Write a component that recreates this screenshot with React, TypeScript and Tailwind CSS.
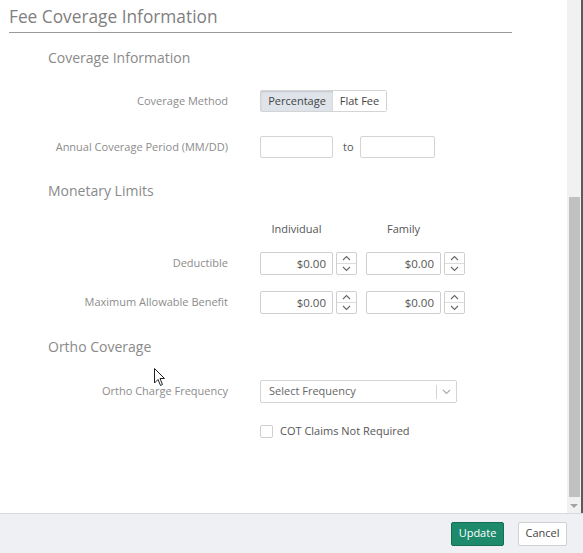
import React from "react";

const Spinner = () => (
  <div className="ml-[3px] flex h-[23px] w-[21px] flex-col rounded-[2px] border border-[#cfcfcf] bg-white">
    <div className="flex flex-1 items-center justify-center border-b border-[#dcdcdc]">
      <svg width="9" height="6" viewBox="0 0 9 6"><path d="M1 5 L4.5 1.5 L8 5" fill="none" stroke="#666" strokeWidth="1.1" /></svg>
    </div>
    <div className="flex flex-1 items-center justify-center">
      <svg width="9" height="6" viewBox="0 0 9 6"><path d="M1 1 L4.5 4.5 L8 1" fill="none" stroke="#666" strokeWidth="1.1" /></svg>
    </div>
  </div>
);

const NumInput = ({ w }: { w: string }) => (
  <div className={`flex h-[23px] ${w} items-center justify-end rounded-[2px] border border-[#cfcfcf] bg-white pr-[6px] text-[11.5px] text-[#555]`}>
    $0.00
  </div>
);

const Label = ({ children }: { children: React.ReactNode }) => (
  <div className="w-[229px] pr-[1px] text-right text-[11px] text-[#8c8c8c]">{children}</div>
);

export default function App() {
  return (
    <div className="relative flex h-[553px] w-[583px] flex-col overflow-hidden bg-white" style={{ fontFamily: '"Open Sans", sans-serif' }}>
      <div className="flex h-[513px]">
        <div className="flex flex-1 flex-col">
          <div className="ml-[9px] h-[33px] w-[503px] border-b border-[#9a9a9a] pt-[6px] text-[17.3px] leading-[22px] text-[#808080]">
            Fee Coverage Information
          </div>
          <div className="ml-[48px] mt-[13px] flex h-[22px] items-center text-[14px] text-[#8a8a8a]">Coverage Information</div>
          <div className="mt-[22px] flex h-[22px] items-center">
            <Label>Coverage Method</Label>
            <div className="ml-[31px] flex h-[22px] rounded-[2px] border border-[#d4d4d4] text-[11px] text-[#444]">
              <div className="flex w-[72px] items-center justify-center bg-[#dfe3ea] shadow-[inset_0_1px_2px_rgba(0,0,0,0.12)]">Percentage</div>
              <div className="flex w-[53px] items-center justify-center bg-white">Flat Fee</div>
            </div>
          </div>
          <div className="mt-[24px] flex h-[22px] items-center">
            <Label>Annual Coverage Period (MM/DD)</Label>
            <div className="ml-[31px] h-[22px] w-[73px] rounded-[2px] border border-[#d4d4d4] bg-white" />
            <div className="ml-[10px] w-[17px] text-[11px] text-[#555]">to</div>
            <div className="h-[22px] w-[75px] rounded-[2px] border border-[#d4d4d4] bg-white" />
          </div>
          <div className="ml-[48px] mt-[21px] flex h-[22px] items-center text-[14px] text-[#8a8a8a]">Monetary Limits</div>
          <div className="mt-[19px] flex h-[18px] items-center text-[11px] text-[#555]">
            <div className="ml-[260px] w-[73px] text-center">Individual</div>
            <div className="ml-[33px] w-[75px] text-center">Family</div>
          </div>
          <div className="mt-[14px] flex h-[23px] items-center">
            <Label>Deductible</Label>
            <div className="ml-[31px] flex items-center">
              <NumInput w="w-[73px]" />
              <Spinner />
              <div className="ml-[9px]" />
              <NumInput w="w-[75px]" />
              <Spinner />
            </div>
          </div>
          <div className="mt-[16px] flex h-[23px] items-center">
            <Label>Maximum Allowable Benefit</Label>
            <div className="ml-[31px] flex items-center">
              <NumInput w="w-[73px]" />
              <Spinner />
              <div className="ml-[9px]" />
              <NumInput w="w-[75px]" />
              <Spinner />
            </div>
          </div>
          <div className="ml-[48px] mt-[21px] flex h-[22px] items-center text-[14px] text-[#8a8a8a]">Ortho Coverage</div>
          <div className="mt-[23px] flex h-[23px] items-center">
            <Label>Ortho Charge Frequency</Label>
            <div className="ml-[31px] flex h-[23px] w-[197px] items-center rounded-[2px] border border-[#d4d4d4] bg-white text-[11px] text-[#666]">
              <div className="flex-1 pl-[8px]">Select Frequency</div>
              <div className="h-[14px] w-px bg-[#d4d4d4]" />
              <div className="flex w-[19px] items-center justify-center">
                <svg width="9" height="6" viewBox="0 0 9 6"><path d="M1 1 L4.5 4.5 L8 1" fill="none" stroke="#aaa" strokeWidth="1.1" /></svg>
              </div>
            </div>
          </div>
          <div className="mt-[20px] flex h-[16px] items-center">
            <div className="ml-[260px] h-[13px] w-[13px] rounded-[2px] border border-[#cfcfcf] bg-white" />
            <div className="ml-[7px] text-[11px] text-[#555]">COT Claims Not Required</div>
          </div>
        </div>
        <div className="relative w-[14px] bg-[#f1f1f1]">
          <div className="absolute left-[2px] top-[197px] h-[300px] w-[11px] bg-[#c1c1c1]" />
          <div className="absolute bottom-[4px] left-[3px]">
            <svg width="8" height="5" viewBox="0 0 8 5"><path d="M0 0 L8 0 L4 4 Z" fill="#a3a3a3" /></svg>
          </div>
        </div>
        <div className="w-[2px] bg-[#5a5a5a]" />
      </div>
      <div className="flex flex-1 items-center justify-end gap-[14px] border-t border-[#d6d9de] bg-[#eef0f4] pr-[16px]">
        <div className="flex h-[24px] w-[53px] items-center justify-center rounded-[2px] border border-[#166e55] bg-[#1d8a6c] text-[11px] text-white">Update</div>
        <div className="flex h-[24px] w-[49px] items-center justify-center rounded-[2px] border border-[#d0d0d0] bg-white text-[11px] text-[#444]">Cancel</div>
      </div>
      <svg className="absolute left-[154px] top-[368px]" width="12" height="19" viewBox="0 0 12 19">
        <path d="M0.5 0.5 L0.5 15 L4 11.5 L6.5 17.5 L8.5 16.5 L6 10.5 L10.5 10.5 Z" fill="white" stroke="#222" strokeWidth="1" />
      </svg>
    </div>
  );
}
